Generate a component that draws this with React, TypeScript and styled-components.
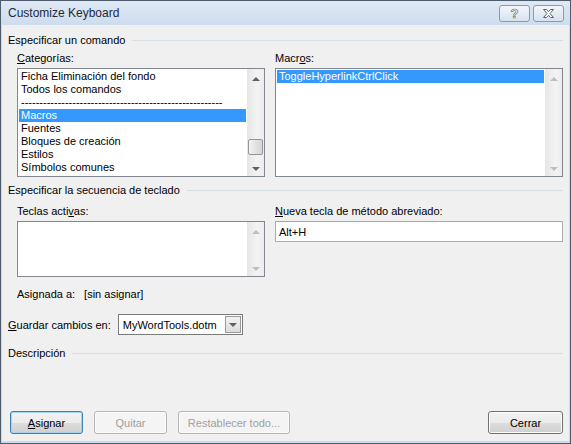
import React from "react";
import styled, { createGlobalStyle } from "styled-components";

const GlobalStyle = createGlobalStyle`
  html, body {
    margin: 0;
    padding: 0;
    background: #f0f0f0;
  }
  * {
    box-sizing: border-box;
  }
`;

const Window = styled.div`
  width: 571px;
  height: 444px;
  display: flex;
  flex-direction: column;
  border: 1px solid #4d5b6d;
  background: #c9dbef;
  font-family: "Liberation Sans", Arial, sans-serif;
  font-size: 11px;
  color: #000;
`;

const TitleBar = styled.div`
  height: 24px;
  display: flex;
  align-items: center;
  padding: 0 6px 0 7px;
  background: linear-gradient(#dfe9f5, #cddcee);
`;

const Title = styled.div`
  flex: 1;
  font-size: 12px;
  color: #1e2a38;
`;

const CaptionButton = styled.div`
  width: 31px;
  height: 17px;
  margin-left: 3px;
  border: 1px solid #8c9aab;
  border-radius: 3px;
  background: linear-gradient(#f2f6fb, #d7e2ef);
  display: flex;
  align-items: center;
  justify-content: center;
  font-size: 13px;
  font-weight: bold;
  color: #fff;
  -webkit-text-stroke: 0.6px #5a6470;
`;

const Body = styled.div`
  flex: 1;
  margin: 0 1px 2px 1px;
  background: #f0f0f0;
  display: flex;
  flex-direction: column;
  padding: 8px 6px 7px 6px;
`;

const GroupHeader = styled.div<{ $top?: number }>`
  display: flex;
  align-items: center;
  gap: 7px;
  height: 14px;
  margin-top: ${(p) => p.$top ?? 0}px;
  white-space: nowrap;
  &::after {
    content: "";
    flex: 1;
    height: 1px;
    background: #d5dfe5;
  }
`;

const Section = styled.div<{ $top?: number }>`
  padding-left: 9px;
  margin-top: ${(p) => p.$top ?? 0}px;
  display: grid;
  grid-template-columns: 248px 1fr;
  column-gap: 10px;
`;

const Field = styled.div`
  display: flex;
  flex-direction: column;
`;

const Label = styled.div`
  height: 14px;
  line-height: 14px;
  margin-bottom: 3px;
  white-space: nowrap;
`;

const Key = styled.span`
  text-decoration: underline;
`;

const ListBox = styled.div<{ $h: number }>`
  height: ${(p) => p.$h}px;
  border: 1px solid #828790;
  background: #fff;
  display: flex;
`;

const ListItems = styled.div`
  flex: 1;
  padding: 1px;
  overflow: hidden;
`;

const Item = styled.div<{ $selected?: boolean }>`
  height: 13px;
  line-height: 13px;
  padding-left: 2px;
  white-space: nowrap;
  overflow: hidden;
  background: ${(p) => (p.$selected ? "#3399ff" : "transparent")};
  color: ${(p) => (p.$selected ? "#fff" : "#000")};
`;

const ScrollBar = styled.div`
  width: 17px;
  display: flex;
  flex-direction: column;
  align-items: center;
  padding: 8px 0 5px;
  background: linear-gradient(to right, #e6e6e6, #f3f3f3 60%, #ededed);
`;

const Arrow = styled.div<{ $down?: boolean; $disabled?: boolean }>`
  width: 0;
  height: 0;
  border-left: 4px solid transparent;
  border-right: 4px solid transparent;
  ${(p) =>
    p.$down
      ? `border-top: 4px solid ${p.$disabled ? "#bfbfbf" : "#5f5f5f"};`
      : `border-bottom: 4px solid ${p.$disabled ? "#bfbfbf" : "#5f5f5f"};`}
`;

const ScrollSpace = styled.div`
  flex: 1;
`;

const Thumb = styled.div`
  width: 15px;
  height: 16px;
  margin-bottom: 12px;
  border: 1px solid #979797;
  border-radius: 2px;
  background: linear-gradient(to right, #f3f3f3, #e2e2e2 50%, #d6d6d6);
`;

const TextInput = styled.div`
  height: 21px;
  border: 1px solid #abadb3;
  border-top-color: #a3a6ad;
  background: #fff;
  display: flex;
  align-items: center;
  padding-left: 3px;
`;

const InfoRow = styled.div`
  margin-top: 10px;
  padding-left: 9px;
  display: flex;
  gap: 9px;
  height: 14px;
  line-height: 14px;
`;

const SaveRow = styled.div`
  margin-top: 13px;
  display: flex;
  align-items: center;
  gap: 7px;
`;

const Combo = styled.div`
  width: 125px;
  height: 21px;
  border: 1px solid #7a7a7a;
  background: #fff;
  display: flex;
  align-items: center;
  padding: 1px;
`;

const ComboText = styled.div`
  flex: 1;
  padding-left: 3px;
`;

const ComboButton = styled.div`
  width: 16px;
  height: 17px;
  border: 1px solid #9a9a9a;
  background: linear-gradient(#f2f2f2, #dcdcdc);
  display: flex;
  align-items: center;
  justify-content: center;
`;

const Spacer = styled.div`
  flex: 1;
`;

const ButtonRow = styled.div`
  display: flex;
  gap: 11px;
  padding-left: 2px;
`;

const Button = styled.div<{ $default?: boolean; $disabled?: boolean; $w: number }>`
  width: ${(p) => p.$w}px;
  height: 23px;
  border-radius: 3px;
  display: flex;
  align-items: center;
  justify-content: center;
  border: 1px solid ${(p) => (p.$disabled ? "#b5b5b5" : p.$default ? "#3c7fb1" : "#707070")};
  background: ${(p) =>
    p.$disabled
      ? "#f4f4f4"
      : "linear-gradient(#f2f2f2 0%, #ebebeb 50%, #dddddd 51%, #cfcfcf 100%)"};
  color: ${(p) => (p.$disabled ? "#a0a0a0" : "#000")};
  box-shadow: ${(p) => (p.$default ? "inset 0 0 0 1px #a8d4f1" : "inset 0 0 0 1px #fcfcfc")};
`;

const categories = [
  "Ficha Eliminación del fondo",
  "Todos los comandos",
  "-------------------------------------------------------",
  "Macros",
  "Fuentes",
  "Bloques de creación",
  "Estilos",
  "Símbolos comunes",
];

export default function App() {
  return (
    <>
      <GlobalStyle />
      <Window>
        <TitleBar>
          <Title>Customize Keyboard</Title>
          <CaptionButton>?</CaptionButton>
          <CaptionButton>
            <svg width="13" height="11" viewBox="0 0 13 11">
              <path
                d="M1.5 1.5h3l2 2.2 2-2.2h3l-3.5 4 3.5 4h-3l-2-2.2-2 2.2h-3l3.5-4z"
                fill="#fff"
                stroke="#5a6470"
                strokeWidth="1"
                strokeLinejoin="round"
              />
            </svg>
          </CaptionButton>
        </TitleBar>
        <Body>
          <GroupHeader>Especificar un comando</GroupHeader>
          <Section $top={4}>
            <Field>
              <Label>
                <Key>C</Key>ategorías:
              </Label>
              <ListBox $h={109}>
                <ListItems>
                  {categories.map((c) => (
                    <Item key={c} $selected={c === "Macros"}>
                      {c}
                    </Item>
                  ))}
                </ListItems>
                <ScrollBar>
                  <Arrow />
                  <ScrollSpace />
                  <Thumb />
                  <Arrow $down />
                </ScrollBar>
              </ListBox>
            </Field>
            <Field>
              <Label>
                Macr<Key>o</Key>s:
              </Label>
              <ListBox $h={109}>
                <ListItems>
                  <Item $selected>ToggleHyperlinkCtrlClick</Item>
                </ListItems>
                <ScrollBar>
                  <Arrow $disabled />
                  <ScrollSpace />
                  <Arrow $down $disabled />
                </ScrollBar>
              </ListBox>
            </Field>
          </Section>

          <GroupHeader $top={6}>Especificar la secuencia de teclado</GroupHeader>
          <Section $top={7}>
            <Field>
              <Label>
                Teclas acti<Key>v</Key>as:
              </Label>
              <ListBox $h={56}>
                <ListItems />
                <ScrollBar>
                  <Arrow $disabled />
                  <ScrollSpace />
                  <Arrow $down $disabled />
                </ScrollBar>
              </ListBox>
            </Field>
            <Field>
              <Label>
                <Key>N</Key>ueva tecla de método abreviado:
              </Label>
              <TextInput>Alt+H</TextInput>
            </Field>
          </Section>

          <InfoRow>
            <span>Asignada a:</span>
            <span>[sin asignar]</span>
          </InfoRow>

          <SaveRow>
            <span>
              <Key>G</Key>uardar cambios en:
            </span>
            <Combo>
              <ComboText>MyWordTools.dotm</ComboText>
              <ComboButton>
                <Arrow $down />
              </ComboButton>
            </Combo>
          </SaveRow>

          <GroupHeader $top={11}>Descripción</GroupHeader>
          <Spacer />
          <ButtonRow>
            <Button $default $w={73}>
              <span>
                <Key>A</Key>signar
              </span>
            </Button>
            <Button $disabled $w={73}>
              Quitar
            </Button>
            <Button $disabled $w={112}>
              Restablecer todo...
            </Button>
            <Spacer />
            <Button $w={75}>Cerrar</Button>
          </ButtonRow>
        </Body>
      </Window>
    </>
  );
}
